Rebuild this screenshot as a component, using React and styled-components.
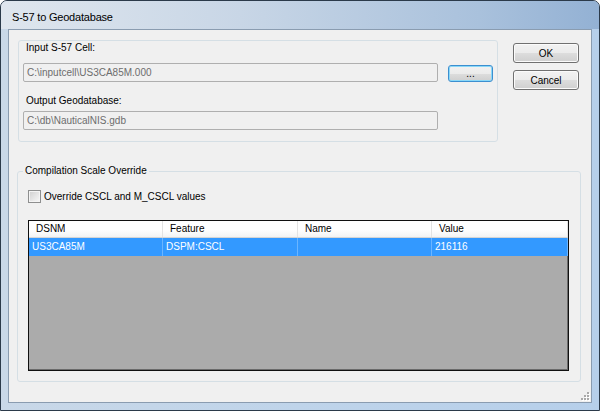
import React from "react";
import styled, { createGlobalStyle } from "styled-components";

const GlobalStyle = createGlobalStyle`
  html, body {
    margin: 0;
    padding: 0;
    background: #ffffff;
  }
  body {
    width: 600px;
    height: 411px;
    overflow: hidden;
  }
`;

const Window = styled.div`
  width: 600px;
  height: 411px;
  box-sizing: border-box;
  border: 1px solid #2b3a4a;
  border-radius: 7px 7px 0 0;
  background: linear-gradient(to right, #c9d8e8 0%, #bfd4ea 50%, #b6cfea 100%);
  display: flex;
  flex-direction: column;
  overflow: hidden;
  font-family: "Liberation Sans", Arial, sans-serif;
  font-size: 10px;
  color: #000000;
`;

const TitleBar = styled.div`
  height: 28px;
  box-sizing: border-box;
  padding: 3px 0 0 11px;
  display: flex;
  align-items: center;
  background: linear-gradient(to right, #dfe6ee 0%, #c8d6e6 40%, #a9c1dc 80%, #93b1d4 100%);
  font-size: 11px;
  letter-spacing: -0.2px;
  color: #000000;
`;

const Client = styled.div`
  flex: 1;
  margin: 0 7px 7px 7px;
  border: 1px solid #8a9cb0;
  background: #f0f0f0;
  position: relative;
`;

const TopRow = styled.div`
  display: flex;
  align-items: flex-start;
  padding: 10px 0 0 9px;
  gap: 15px;
`;

const GroupBox = styled.div`
  width: 480px;
  height: 102px;
  box-sizing: border-box;
  border: 1px solid #d5dfe5;
  border-radius: 3px;
  padding: 1px 0 0 4px;
`;

const FieldLabel = styled.div`
  line-height: 12px;
  margin: ${({ top }) => top || 0}px 0 0 3px;
`;

const FieldRow = styled.div`
  display: flex;
  align-items: flex-end;
  margin-top: ${({ top }) => top || 0}px;
`;

const TextBox = styled.div`
  width: 415px;
  height: 19px;
  box-sizing: border-box;
  border: 1px solid #afafaf;
  border-radius: 2px;
  background: #f0f0f0;
  color: #6d6d6d;
  padding-left: 3px;
  line-height: 17px;
  white-space: nowrap;
`;

const PushButton = styled.div`
  width: ${({ w }) => w}px;
  height: ${({ h }) => h}px;
  box-sizing: border-box;
  border: 1px solid ${({ focused }) => (focused ? "#3c8fd0" : "#707070")};
  border-radius: 3px;
  background: linear-gradient(#f2f2f2 0%, #ebebeb 50%, #dddddd 51%, #cfcfcf 100%);
  box-shadow: inset 0 0 0 1px ${({ focused }) => (focused ? "#8ad8f8" : "#fbfbfb")};
  display: flex;
  align-items: center;
  justify-content: center;
  font-size: 10px;
  color: #000000;
  margin-left: ${({ left }) => left || 0}px;
`;

const ButtonColumn = styled.div`
  display: flex;
  flex-direction: column;
  gap: 7px;
  margin-top: 3px;
`;

const Fieldset = styled.fieldset`
  margin: 23px 0 0 8px;
  width: 564px;
  box-sizing: border-box;
  padding: 0;
  border: 1px solid #d5dfe5;
  border-radius: 3px;
  min-width: 0;
`;

const Legend = styled.legend`
  padding: 0 2px;
  margin-left: 5px;
  line-height: 12px;
`;

const GroupBody = styled.div`
  padding: 13px 11px 10px 10px;
`;

const CheckRow = styled.div`
  display: flex;
  align-items: center;
  gap: 3px;
  height: 13px;
`;

const CheckBox = styled.div`
  width: 13px;
  height: 13px;
  box-sizing: border-box;
  border: 1px solid #8e8f8f;
  background: linear-gradient(135deg, #cfcfcf 0%, #e8e8e8 60%, #f8f8f8 100%);
  box-shadow: inset 0 0 0 1px #f4f4f4;
`;

const Table = styled.div`
  margin-top: 17px;
  height: 151px;
  box-sizing: border-box;
  border: 1px solid #101010;
  box-shadow: inset -1px -1px 0 #6a6a6a;
  background: #ababab;
`;

const HeaderRow = styled.div`
  display: grid;
  grid-template-columns: 134px 135px 134px 1fr;
  height: 17px;
  box-sizing: border-box;
  border-bottom: 1px solid #d5d5d5;
  background: linear-gradient(#ffffff 0%, #ffffff 55%, #f3f3f3 100%);
`;

const HeaderCell = styled.div`
  padding-left: 7px;
  line-height: 16px;
  border-right: 1px solid #e3e3e3;
`;

const DataRow = styled.div`
  display: grid;
  grid-template-columns: 134px 135px 134px 1fr;
  height: 18px;
  background: ${({ selected }) => (selected ? "#3399ff" : "#ffffff")};
  color: ${({ selected }) => (selected ? "#ffffff" : "#000000")};
`;

const DataCell = styled.div`
  padding-left: 3px;
  line-height: 18px;
  border-right: 1px solid rgba(255, 255, 255, 0.28);
`;

const Grip = styled.svg`
  position: absolute;
  right: 1px;
  bottom: 1px;
  width: 10px;
  height: 10px;
`;

const columns = ["DSNM", "Feature", "Name", "Value"];
const rows = [{ dsnm: "US3CA85M", feature: "DSPM:CSCL", name: "", value: "216116" }];

const gripDots = [
  [7, 1],
  [7, 4],
  [4, 4],
  [7, 7],
  [4, 7],
  [1, 7],
];

export default function App() {
  return (
    <>
      <GlobalStyle />
      <Window>
        <TitleBar>S-57 to Geodatabase</TitleBar>
        <Client>
          <TopRow>
            <GroupBox>
              <FieldLabel>Input S-57 Cell:</FieldLabel>
              <FieldRow top={9}>
                <TextBox>C:\inputcell\US3CA85M.000</TextBox>
                <PushButton w={45} h={17} left={10} focused>
                  ...
                </PushButton>
              </FieldRow>
              <FieldLabel top={13}>Output Geodatabase:</FieldLabel>
              <FieldRow top={4}>
                <TextBox>C:\db\NauticalNIS.gdb</TextBox>
              </FieldRow>
            </GroupBox>
            <ButtonColumn>
              <PushButton w={66} h={20}>OK</PushButton>
              <PushButton w={66} h={20}>Cancel</PushButton>
            </ButtonColumn>
          </TopRow>
          <Fieldset>
            <Legend>Compilation Scale Override</Legend>
            <GroupBody>
              <CheckRow>
                <CheckBox />
                <span>Override CSCL and M_CSCL values</span>
              </CheckRow>
              <Table>
                <HeaderRow>
                  {columns.map((c) => (
                    <HeaderCell key={c}>{c}</HeaderCell>
                  ))}
                </HeaderRow>
                {rows.map((r) => (
                  <DataRow key={r.dsnm} selected>
                    <DataCell>{r.dsnm}</DataCell>
                    <DataCell>{r.feature}</DataCell>
                    <DataCell>{r.name}</DataCell>
                    <DataCell>{r.value}</DataCell>
                  </DataRow>
                ))}
              </Table>
            </GroupBody>
          </Fieldset>
          <Grip viewBox="0 0 10 10">
            {gripDots.map(([x, y]) => (
              <g key={`${x}-${y}`}>
                <rect x={x + 1} y={y + 1} width="2" height="2" fill="#ffffff" />
                <rect x={x} y={y} width="2" height="2" fill="#a9a9a9" />
              </g>
            ))}
          </Grip>
        </Client>
      </Window>
    </>
  );
}
